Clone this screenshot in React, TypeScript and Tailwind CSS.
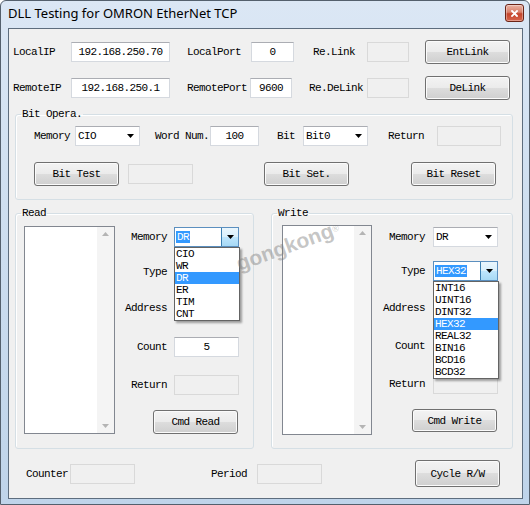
import clsx from "clsx";
import type { ReactNode } from "react";

const btnFace =
  "rounded-[3px] border border-[#707070] bg-[linear-gradient(to_bottom,#f3f3f3_0%,#ebebeb_49%,#dddddd_50%,#cfcfcf_100%)] shadow-[inset_0_0_0_1px_#fbfbfb] flex items-center justify-center";

function Btn({ className, children }: { className: string; children: ReactNode }) {
  return <div className={clsx(btnFace, className)}>{children}</div>;
}

function TextBox({
  className,
  value = "",
  disabled = false,
}: {
  className: string;
  value?: string;
  disabled?: boolean;
}) {
  return (
    <div
      className={clsx(
        "h-[20px] flex items-center justify-center border shrink-0",
        disabled
          ? "bg-[#f0f0f0] border-[#d9d9d9]"
          : "bg-white border-[#d5d9df] border-t-[#abadb3]",
        className
      )}
    >
      {value}
    </div>
  );
}

function Arrow() {
  return (
    <svg width="7" height="4" viewBox="0 0 7 4">
      <path d="M0 0h7L3.5 4z" fill="#000" />
    </svg>
  );
}

function Combo({ value = "", className = "w-[65px]" }: { value?: string; className?: string }) {
  return (
    <div
      className={clsx(
        "h-[20px] flex items-center justify-between bg-white border border-[#d5d9df] border-t-[#abadb3] pl-[2px] pr-[5px] shrink-0",
        className
      )}
    >
      <span>{value}</span>
      <Arrow />
    </div>
  );
}

// combo with its drop-down list open (drawn over the controls below it)
function OpenCombo({ value, items }: { value: string; items: string[] }) {
  return (
    <div className="relative z-10 w-[65px] shrink-0">
      <div className="h-[20px] flex items-center bg-white border border-[#5b8fbf] pl-[1px]">
        <span className="bg-[#3399ff] text-white px-[1px]">{value}</span>
        <div className="ml-auto h-full w-[17px] flex items-center justify-center border-l border-[#3c7fb1] bg-[linear-gradient(to_bottom,#eaf6fd_0%,#d9f0fc_49%,#bee6fd_50%,#a7d9f5_100%)]">
          <Arrow />
        </div>
      </div>
      <div className="absolute left-0 top-full w-[66px] bg-white border border-[#646464] shadow-[2px_2px_2px_rgba(0,0,0,0.35)]">
        {items.map((it) => (
          <div
            key={it}
            className={clsx(
              "h-[12px] leading-[12px] pl-[1px]",
              it === value ? "bg-[#3399ff] text-white" : ""
            )}
          >
            {it}
          </div>
        ))}
      </div>
    </div>
  );
}

function ListBox({ className }: { className: string }) {
  return (
    <div className={clsx("flex bg-white border border-[#828790] shrink-0", className)}>
      <div className="flex-1" />
      <div className="w-[17px] bg-[#f4f4f4] flex flex-col items-center justify-between py-[5px]">
        <svg width="7" height="4" viewBox="0 0 7 4">
          <path d="M0 4h7L3.5 0z" fill="#b4b4b4" />
        </svg>
        <svg width="7" height="4" viewBox="0 0 7 4">
          <path d="M0 0h7L3.5 4z" fill="#b4b4b4" />
        </svg>
      </div>
    </div>
  );
}

function Group({ title, className, children }: { title: string; className: string; children: ReactNode }) {
  return (
    <fieldset
      className={clsx(
        "border border-[#d5dfe5] rounded-[3px] shadow-[inset_1px_1px_0_#ffffff] shrink-0",
        className
      )}
    >
      <legend className="ml-[5px] px-[1px] leading-[12px]">{title}</legend>
      {children}
    </fieldset>
  );
}

function Row({ label, mt, children, gap = "ml-[7px]" }: { label: string; mt: string; children: ReactNode; gap?: string }) {
  return (
    <div className={clsx("flex items-center h-[20px]", mt)}>
      <span className="w-[42px] text-right">{label}</span>
      <div className={gap}>{children}</div>
    </div>
  );
}

export default function App() {
  return (
    <div className="w-[530px] h-[505px] flex flex-col border border-[#54606d] rounded-t-[6px] bg-[linear-gradient(to_bottom,#dbe7f5_0%,#cfdff0_40%,#bfd4ea_100%)] overflow-hidden">
      {/* title bar */}
      <div className="h-[27px] flex items-center pl-[7px] pr-[5px] shrink-0">
        <span className="font-['Noto_Sans',sans-serif] text-[13px] text-black mt-[-1px]">
          DLL Testing for OMRON EtherNet TCP
        </span>
        <div className="ml-auto mt-[-3px] w-[19px] h-[18px] rounded-[3px] border border-[#6b2417] bg-[linear-gradient(to_bottom,#eab3a4_0%,#d9806b_45%,#c4432a_55%,#d7654c_100%)] shadow-[inset_0_0_0_1px_rgba(255,255,255,0.35)] flex items-center justify-center">
          <svg width="7" height="7" viewBox="0 0 7 7">
            <path d="M1 1l5 5M6 1L1 6" stroke="#fff" strokeWidth="1.8" strokeLinecap="square" />
          </svg>
        </div>
      </div>

      {/* client area */}
      <div className="relative ml-[7px] w-[515px] h-[471px] bg-[#f0f0f0] border border-[#5d6d7e] font-['Liberation_Mono','DejaVu_Sans_Mono',monospace] text-[11px] tracking-[-0.6px] leading-[12px] text-black flex flex-col">
        <div className="flex items-center h-[24px] mt-[11px] pl-[4px]">
          <span className="w-[58px]">LocalIP</span>
          <TextBox className="w-[99px]" value="192.168.250.70" />
          <span className="ml-[17px] w-[64px]">LocalPort</span>
          <TextBox className="w-[43px]" value="0" />
          <span className="ml-[19px] w-[54px]">Re.Link</span>
          <TextBox className="w-[42px]" disabled />
          <Btn className="ml-[16px] w-[85px] h-[24px]">EntLink</Btn>
        </div>

        <div className="flex items-center h-[24px] mt-[12px] pl-[4px]">
          <span className="w-[58px]">RemoteIP</span>
          <TextBox className="w-[99px]" value="192.168.250.1" />
          <span className="ml-[17px] w-[63px]">RemotePort</span>
          <TextBox className="w-[42px]" value="9600" />
          <span className="ml-[17px] w-[58px]">Re.DeLink</span>
          <TextBox className="w-[42px]" disabled />
          <Btn className="ml-[16px] w-[85px] h-[24px]">DeLink</Btn>
        </div>

        <Group title="Bit Opera." className="ml-[6px] mt-[8px] w-[498px] h-[92px]">
          <div className="flex items-center h-[20px] mt-[6px] pl-[18px]">
            <span className="w-[41px]">Memory</span>
            <Combo value="CIO" />
            <span className="ml-[15px] w-[55px]">Word Num.</span>
            <TextBox className="w-[49px]" value="100" />
            <span className="ml-[18px] w-[26px]">Bit</span>
            <Combo value="Bit0" />
            <span className="ml-[20px] w-[49px]">Return</span>
            <TextBox className="w-[64px]" disabled />
          </div>
          <div className="flex items-center h-[24px] mt-[16px] pl-[18px]">
            <Btn className="w-[85px] h-[24px]">Bit Test</Btn>
            <TextBox className="ml-[9px] w-[65px]" disabled />
            <Btn className="ml-[71px] w-[85px] h-[24px]">Bit Set.</Btn>
            <Btn className="ml-[62px] w-[85px] h-[24px]">Bit Reset</Btn>
          </div>
        </Group>

        <div className="flex mt-[7px] ml-[6px]">
          <Group title="Read" className="w-[239px] h-[242px]">
            <div className="flex items-start">
              <ListBox className="ml-[8px] mt-[7px] w-[91px] h-[208px]" />
              <div className="ml-[10px] flex flex-col">
                <Row label="Memory" mt="mt-[8px]">
                  <OpenCombo value="DR" items={["CIO", "WR", "DR", "ER", "TIM", "CNT"]} />
                </Row>
                <Row label="Type" mt="mt-[15px]">
                  <Combo />
                </Row>
                <Row label="Address" mt="mt-[16px]">
                  <TextBox className="w-[65px]" />
                </Row>
                <Row label="Count" mt="mt-[19px]">
                  <TextBox className="w-[65px]" value="5" />
                </Row>
                <Row label="Return" mt="mt-[18px]">
                  <TextBox className="w-[65px]" disabled />
                </Row>
                <Btn className="mt-[15px] ml-[28px] w-[85px] h-[24px]">Cmd Read</Btn>
              </div>
            </div>
          </Group>

          <Group title="Write" className="ml-[17px] w-[242px] h-[242px]">
            <div className="flex items-start">
              <ListBox className="ml-[10px] mt-[6px] w-[90px] h-[210px]" />
              <div className="ml-[11px] flex flex-col">
                <Row label="Memory" mt="mt-[8px]" gap="ml-[8px]">
                  <Combo value="DR" />
                </Row>
                <Row label="Type" mt="mt-[14px]" gap="ml-[8px]">
                  <OpenCombo
                    value="HEX32"
                    items={["INT16", "UINT16", "DINT32", "HEX32", "REAL32", "BIN16", "BCD16", "BCD32"]}
                  />
                </Row>
                <Row label="Address" mt="mt-[17px]" gap="ml-[8px]">
                  <TextBox className="w-[65px]" />
                </Row>
                <Row label="Count" mt="mt-[18px]" gap="ml-[8px]">
                  <TextBox className="w-[65px]" />
                </Row>
                <Row label="Return" mt="mt-[18px]" gap="ml-[8px]">
                  <TextBox className="w-[65px]" disabled />
                </Row>
                <Btn className="mt-[15px] ml-[29px] w-[85px] h-[23px]">Cmd Write</Btn>
              </div>
            </div>
          </Group>
        </div>

        <div className="flex items-center h-[27px] mt-[11px] pl-[17px]">
          <span className="w-[44px]">Counter</span>
          <TextBox className="w-[65px]" disabled />
          <span className="ml-[76px] w-[46px]">Period</span>
          <TextBox className="w-[65px]" disabled />
          <Btn className="ml-[93px] w-[85px] h-[27px]">Cycle R/W</Btn>
        </div>

        {/* watermark */}
        <div className="absolute left-[279px] top-[217px] -translate-x-1/2 -translate-y-1/2 -rotate-[20deg] whitespace-nowrap font-['Liberation_Sans',sans-serif] font-bold text-[21px] leading-[24px] tracking-normal text-[rgba(125,125,125,0.45)] pointer-events-none z-20">
          gongkong<sup className="text-[9px] font-normal">®</sup>
        </div>
      </div>
    </div>
  );
}
